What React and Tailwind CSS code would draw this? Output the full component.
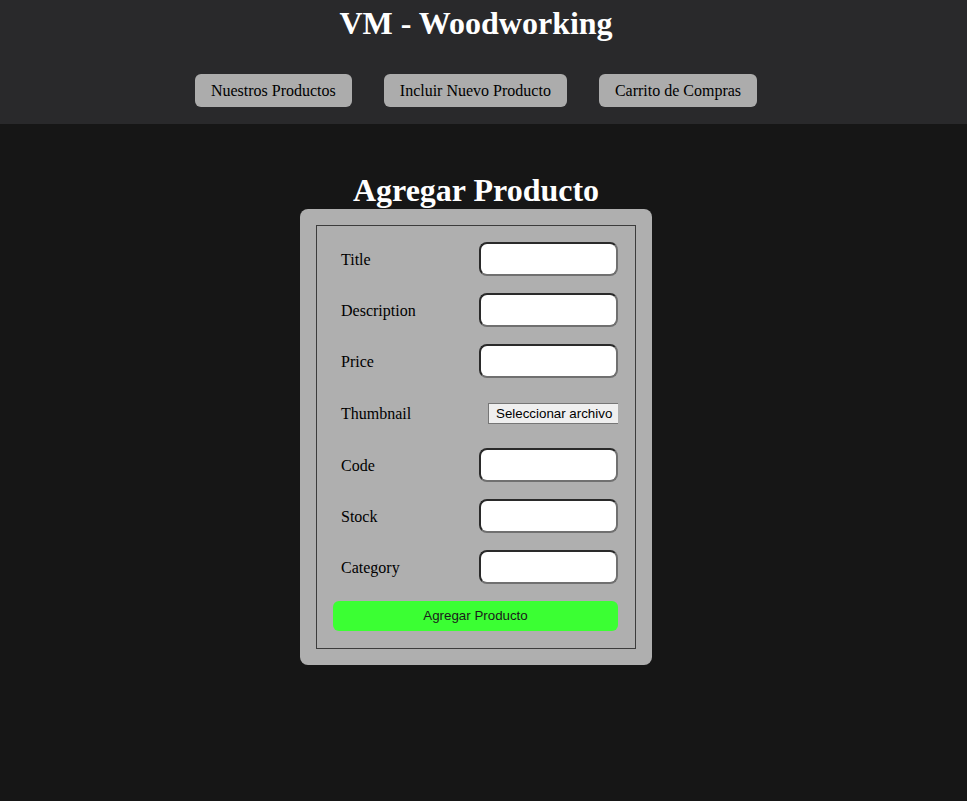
const FIELDS = ["Title", "Description", "Price", "Thumbnail", "Code", "Stock", "Category"];

function Field({ label }) {
  return (
    <div className="flex items-center justify-between">
      <label className="pl-2 pt-[2px] text-[16px] text-black">{label}</label>
      {label === "Thumbnail" ? (
        <div className="flex h-[36px] items-center">
          <div className="w-[130px] overflow-hidden">
            <span className="block w-[140px] whitespace-nowrap border border-[#767676] bg-[#efefef] px-[7px] pt-[2px] pb-[1px] font-['Liberation_Sans',Arial,sans-serif] text-[13.33px] leading-[16px] text-black">
              Seleccionar archivo
            </span>
          </div>
        </div>
      ) : (
        <input
          type="text"
          className="h-[34px] w-[139px] rounded-[8px] border-2 border-t-[#2a2a2a] border-l-[#2a2a2a] border-b-[#707070] border-r-[#707070] bg-white px-2 outline-none"
        />
      )}
    </div>
  );
}

export default function App() {
  return (
    <div className="min-h-screen bg-[#161616] font-['Liberation_Serif','Times_New_Roman',serif]">
      <header className="bg-[#29292b] pr-[15px] pt-[5px] pb-[17px]">
        <h1 className="text-center text-[32px] font-bold leading-[37px] text-white">VM - Woodworking</h1>
        <nav className="mt-[32px] flex justify-center gap-[32px]">
          {["Nuestros Productos", "Incluir Nuevo Producto", "Carrito de Compras"].map((t) => (
            <button
              key={t}
              className="h-[33px] rounded-[6px] bg-[#acacac] px-4 text-[16px] text-black"
            >
              {t}
            </button>
          ))}
        </nav>
      </header>

      <main className="flex flex-col items-center pr-[15px] pt-[48px]">
        <h2 className="text-center text-[32px] font-bold leading-[37px] text-white">Agregar Producto</h2>
        <form className="w-[352px] rounded-[8px] bg-[#afafaf] p-4">
          <fieldset className="flex flex-col gap-[17px] border border-[#3c3c3c] pl-4 pr-[17px] pt-4 pb-[17px]">
            {FIELDS.map((f) => (
              <Field key={f} label={f} />
            ))}
            <button
              type="button"
              className="h-[30px] w-full rounded-[6px] bg-[#3bff33] font-['Liberation_Sans',Arial,sans-serif] text-[13.33px] text-[#1a1a1a]"
            >
              Agregar Producto
            </button>
          </fieldset>
        </form>
      </main>
    </div>
  );
}
